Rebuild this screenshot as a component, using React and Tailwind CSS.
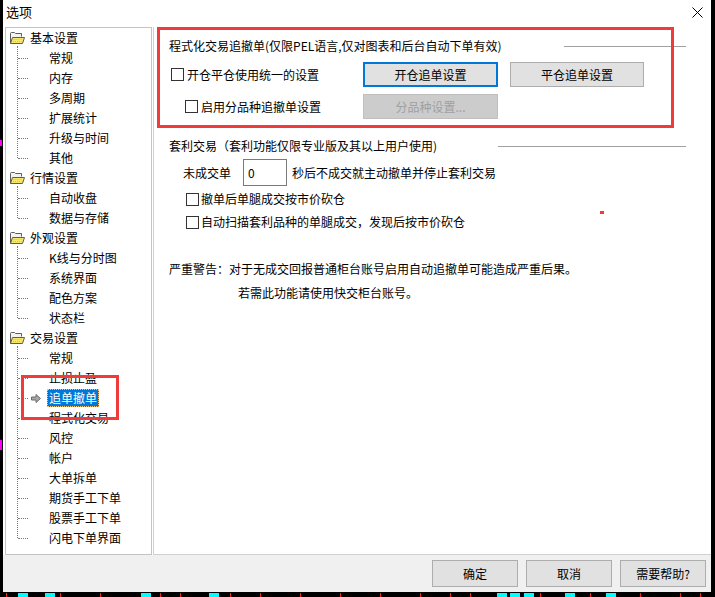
import React from "react";

const groups = [
  { name: "基本设置", items: ["常规", "内存", "多周期", "扩展统计", "升级与时间", "其他"] },
  { name: "行情设置", items: ["自动收盘", "数据与存储"] },
  { name: "外观设置", items: ["K线与分时图", "系统界面", "配色方案", "状态栏"] },
  {
    name: "交易设置",
    items: ["常规", "止损止盈", "追单撤单", "程式化交易", "风控", "帐户", "大单拆单", "期货手工下单", "股票手工下单", "闪电下单界面"],
  },
];

function Folder() {
  return (
    <svg width="16" height="14" viewBox="0 0 16 14" className="shrink-0">
      <path d="M1.5 12.5 V2.5 Q1.5 1.5 2.5 1.5 H5.5 L6.5 2.5 H12.5 V5.5" fill="#f2f2f2" stroke="#5c5c5c" />
      <path d="M1.5 12.5 L3.5 6.5 H15.5 L13.5 12.5 Z" fill="#f7e86a" stroke="#5c5c5c" />
      <path d="M4.5 8.5 H13 M4 10.5 H12.5" stroke="#d8c440" strokeDasharray="1 1" />
    </svg>
  );
}

function Arrow() {
  return (
    <svg width="10" height="9" viewBox="0 0 10 9" className="shrink-0">
      <polygon points="0.5,3 5,3 5,0.5 9.5,4.5 5,8.5 5,6 0.5,6" fill="#a8a8a8" stroke="#6a6a6a" strokeWidth="1" />
    </svg>
  );
}

function Box() {
  return <span className="inline-block w-[13px] h-[13px] border border-[#333] bg-white shrink-0" />;
}

function Tree() {
  return (
    <div className="ml-[2px] w-[147px] border border-[#c4c4c4] bg-white pl-[3px]">
      {groups.map((g) => (
        <div key={g.name}>
          <div className="h-[20px] flex items-center gap-[5px]">
            <Folder />
            <span>{g.name}</span>
          </div>
          <div className="relative">
            <span className="absolute left-[8px] top-[-2px] bottom-[10px] border-l border-dotted border-[#7a7a7a]" />
            {g.items.map((it, i) => {
              const sel = it === "追单撤单";
              return (
                <div key={i} className="h-[20px] flex items-center">
                  <div className="w-[38px] flex items-center shrink-0">
                    <span className="ml-[9px] w-[10px] h-0 border-t border-dotted border-[#7a7a7a]" />
                    {sel && (
                      <span className="ml-[3px]">
                        <Arrow />
                      </span>
                    )}
                  </div>
                  {sel ? (
                    <span className="px-[1px] h-[18px] flex items-center bg-[#0078d7] text-white border border-dotted border-[#f3c27a]">
                      {it}
                    </span>
                  ) : (
                    <span className="pl-[2px]">{it}</span>
                  )}
                </div>
              );
            })}
          </div>
        </div>
      ))}
    </div>
  );
}

function Btn({ children, focus, disabled, w = "w-[135px]" }) {
  let cls = "bg-[#e1e1e1] border border-[#adadad] text-black";
  if (focus) cls = "bg-[#e1e1e1] border-2 border-[#0078d7] text-black";
  if (disabled) cls = "bg-[#cccccc] border border-[#bfbfbf] text-[#a0a0a0]";
  return <div className={`${w} h-[25px] flex items-center justify-center shrink-0 ${cls}`}>{children}</div>;
}

export default function App() {
  return (
    <div className="w-[715px] h-[597px] bg-black overflow-hidden relative pl-[3px] text-[12px] leading-[20px] text-black font-['Noto_Sans_CJK_SC','Microsoft_YaHei',sans-serif]">
      {/* bottom chart strip */}
      <div className="absolute left-0 right-0 top-[592px] h-[5px]">
        {[18, 45, 141, 209, 497, 510, 524, 565, 606].map((x) => (
          <span key={x} className="absolute top-[1px] h-[4px] w-[10px] bg-[#00ffff]" style={{ left: x }} />
        ))}
        {[6, 60, 100, 160, 180, 230, 260, 300, 340, 380, 420, 450, 470, 540, 590, 640, 680, 700].map((x) => (
          <span key={x} className="absolute top-[1px] h-[4px] w-[1px] bg-[#ff2020]" style={{ left: x }} />
        ))}
      </div>
      <div className="absolute left-0 top-[140px] w-[2px] h-[6px] bg-[#ff00ff]" />
      <div className="absolute left-0 top-[440px] w-[2px] h-[10px] bg-[#ff00ff]" />

      <div className="relative w-[708px] h-[592px] bg-white flex flex-col">
        {/* title */}
        <div className="h-[24px] flex items-center justify-between pl-[3px] pr-[8px] text-[13px]">
          <span>选项</span>
          <svg width="11" height="11" viewBox="0 0 11 11">
            <path d="M0.5 0.5 L10.5 10.5 M10.5 0.5 L0.5 10.5" stroke="#000" strokeWidth="1" />
          </svg>
        </div>

        {/* body */}
        <div className="flex-1 flex pt-[3px]">
          <Tree />
          <div className="flex-1 ml-[1px] border-l border-b border-[#d0d0d0] bg-white flex flex-col">
            <div className="mt-[9px] h-[20px] flex items-center pl-[15px] pr-[25px]">
              <span>程式化交易追撤单(仅限PEL语言,仅对图表和后台自动下单有效)</span>
              <span className="ml-auto w-[122px] h-px bg-[#a0a0a0]" />
            </div>
            <div className="mt-[6px] h-[25px] flex items-center">
              <div className="w-[209px] pl-[17px] flex items-center gap-[3px] shrink-0">
                <Box />
                <span>开仓平仓使用统一的设置</span>
              </div>
              <Btn focus>开仓追单设置</Btn>
              <div className="ml-[12px]">
                <Btn w="w-[134px]">平仓追单设置</Btn>
              </div>
            </div>
            <div className="mt-[7px] h-[25px] flex items-center">
              <div className="w-[209px] pl-[31px] flex items-center gap-[3px] shrink-0">
                <Box />
                <span>启用分品种追撤单设置</span>
              </div>
              <Btn disabled>分品种设置...</Btn>
            </div>

            <div className="mt-[17px] h-[20px] flex items-center pl-[15px] pr-[25px]">
              <span>套利交易（套利功能仅限专业版及其以上用户使用)</span>
              <span className="ml-auto w-[188px] h-px bg-[#a0a0a0]" />
            </div>
            <div className="mt-[3px] h-[27px] flex items-center pl-[29px]">
              <span>未成交单</span>
              <div className="ml-[12px] w-[44px] h-[27px] border border-[#7a7a7a] bg-white flex items-center pl-[4px]">0</div>
              <span className="ml-[5px]">秒后不成交就主动撤单并停止套利交易</span>
            </div>
            <div className="mt-[3px] h-[20px] flex items-center pl-[32px] gap-[2px]">
              <Box />
              <span>撤单后单腿成交按市价砍仓</span>
            </div>
            <div className="mt-[3px] h-[20px] flex items-center pl-[32px] gap-[2px]">
              <Box />
              <span>自动扫描套利品种的单腿成交，发现后按市价砍仓</span>
            </div>
            <div className="mt-[27px] h-[20px] flex items-center pl-[15px]">
              严重警告：对于无成交回报普通柜台账号启用自动追撤单可能造成严重后果。
            </div>
            <div className="mt-[4px] h-[20px] flex items-center pl-[84px]">若需此功能请使用快交柜台账号。</div>
          </div>
        </div>

        {/* bottom bar */}
        <div className="h-[37px] bg-[#f0f0f0] flex justify-end items-start pt-[5px] pr-[5px] gap-[8px]">
          {["确定", "取消", "需要帮助?"].map((t) => (
            <div key={t} className="w-[86px] h-[27px] bg-[#e1e1e1] border border-[#adadad] flex items-center justify-center">
              {t}
            </div>
          ))}
        </div>

        {/* annotations */}
        <div className="absolute left-[154px] top-[27px] w-[517px] h-[101px] border-[3px] border-[#ef3b3b]" />
        <div className="absolute left-[18px] top-[375px] w-[98px] h-[45px] border-[3px] border-[#ef3b3b]" />
        <div className="absolute left-[597px] top-[211px] w-[4px] h-[3px] bg-[#ef3b3b]" />
      </div>
    </div>
  );
}
